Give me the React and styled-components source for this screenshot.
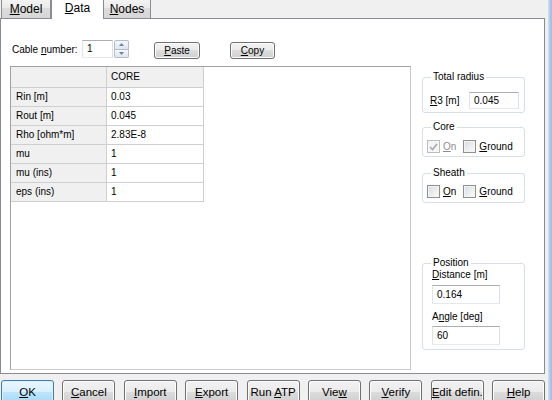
import React from "react";
import styled, { createGlobalStyle } from "styled-components";

const GlobalStyle = createGlobalStyle`
  html, body { margin: 0; padding: 0; background: #f0f0f0; }
  body {
    font-family: "Liberation Sans", Arial, sans-serif;
    font-size: 10px;
    color: #000;
  }
`;

const Window = styled.div`
  width: 552px;
  height: 400px;
  display: flex;
  overflow: hidden;
  background: #f0f0f0;
`;

const Main = styled.div`
  width: 548px;
  display: flex;
  flex-direction: column;
`;

const Frame = styled.div`
  width: 4px;
  background: linear-gradient(to right, #d3e2f1, #a9c6e4 60%, #9fbfe0);
`;

const TabStrip = styled.div`
  height: 18px;
  display: flex;
  align-items: flex-end;
  padding-left: 1px;
  position: relative;
  z-index: 1;
`;

const Tab = styled.div`
  box-sizing: border-box;
  width: ${(p) => p.$w}px;
  height: ${(p) => (p.$active ? 21 : 20)}px;
  margin-bottom: ${(p) => (p.$active ? -1 : 0)}px;
  border: 1px solid #898c95;
  border-bottom: none;
  border-left-width: ${(p) => (p.$first ? 1 : p.$active ? 1 : 0)}px;
  background: ${(p) =>
    p.$active ? "#fff" : "linear-gradient(#f4f4f4, #e9e9e9 50%, #dcdcdc 50%, #d6d6d6)"};
  font-size: 12px;
  display: flex;
  align-items: flex-end;
  justify-content: center;
  padding-bottom: ${(p) => (p.$active ? 5 : 3)}px;
  line-height: 12px;
`;

const Panel = styled.div`
  height: 356px;
  box-sizing: border-box;
  margin-right: 3px;
  background: #fff;
  border: 1px solid #898c95;
  padding: 21px 0 0 9px;
  display: flex;
  flex-direction: column;
  gap: 8px;
`;

const TopRow = styled.div`
  height: 18px;
  display: flex;
  align-items: flex-start;
  padding-left: 2px;
`;

const Label = styled.span`
  line-height: 12px;
  color: ${(p) => (p.$disabled ? "#8d8d8d" : "#000")};
  white-space: nowrap;
`;

const CableLabel = styled(Label)`
  margin-top: 4px;
  width: 70px;
`;

const U = styled.span`
  text-decoration: underline;
  text-underline-offset: 1px;
`;

const Input = styled.div`
  box-sizing: border-box;
  width: ${(p) => p.$w}px;
  height: ${(p) => p.$h}px;
  border: 1px solid #e3e9ef;
  border-top-color: #abadb3;
  border-left-color: #e2e3ea;
  border-right-color: #dbdfe6;
  background: #fff;
  padding-left: 4px;
  display: flex;
  align-items: center;
  line-height: 12px;
`;

const Spin = styled.div`
  width: 15px;
  height: 18px;
  margin-left: 1px;
  display: flex;
  flex-direction: column;
`;

const SpinHalf = styled.div`
  flex: 1;
  box-sizing: border-box;
  border: 1px solid #b4bcc8;
  border-top-width: ${(p) => (p.$down ? 0 : 1)}px;
  border-radius: ${(p) => (p.$down ? "0 0 2px 2px" : "2px 2px 0 0")};
  background: linear-gradient(#f6f8fb, #dfe5ee);
  display: flex;
  align-items: center;
  justify-content: center;
`;

const Button = styled.div`
  box-sizing: border-box;
  width: ${(p) => p.$w}px;
  height: ${(p) => p.$h}px;
  margin-left: ${(p) => p.$ml || 0}px;
  margin-top: ${(p) => p.$mt || 0}px;
  flex-shrink: 0;
  border: 1px solid ${(p) => (p.$default ? "#3c7fb1" : "#707070")};
  border-radius: 3px;
  background: ${(p) =>
    p.$default
      ? "linear-gradient(#eaf6fd, #d9f0fc 50%, #bee6fd 50%, #a7d9f5)"
      : "linear-gradient(#f2f2f2, #ebebeb 50%, #dddddd 50%, #cfcfcf)"};
  box-shadow: inset 0 0 0 1px ${(p) => (p.$default ? "#dff0fb" : "#fcfcfc")};
  display: flex;
  align-items: center;
  justify-content: center;
  font-size: ${(p) => p.$fs || 10}px;
  line-height: 12px;
  white-space: nowrap;
`;

const Body = styled.div`
  display: flex;
  align-items: flex-start;
  gap: 11px;
`;

const GridBox = styled.div`
  box-sizing: border-box;
  width: 401px;
  height: 304px;
  border: 1px solid #a0a0a0;
  border-right-color: #c8c8c8;
  border-bottom-color: #c8c8c8;
  background: #fff;
`;

const Table = styled.div`
  display: grid;
  grid-template-columns: 96px 97px;
  grid-template-rows: 21px;
  grid-auto-rows: 19px;
`;

const Cell = styled.div`
  box-sizing: border-box;
  border-right: 1px solid #cfcfcf;
  border-bottom: 1px solid #cfcfcf;
  background: ${(p) => (p.$fixed ? "#f0f0f0" : "#fff")};
  padding-left: ${(p) => (p.$head ? 5 : 4)}px;
  display: flex;
  align-items: center;
  line-height: 12px;
  white-space: nowrap;
`;

const Side = styled.div`
  width: 103px;
  display: flex;
  flex-direction: column;
`;

const Group = styled.div`
  position: relative;
  box-sizing: border-box;
  height: ${(p) => p.$h}px;
  margin-top: ${(p) => p.$mt}px;
  padding: ${(p) => p.$pad};
  border: 1px solid #d5dfe5;
  border-radius: 3px;
`;

const Caption = styled.span`
  position: absolute;
  top: -7px;
  left: 8px;
  padding: 0 2px;
  background: #fff;
  line-height: 12px;
`;

const FieldRow = styled.div`
  display: flex;
  align-items: center;
  justify-content: space-between;
`;

const CheckRow = styled.div`
  display: flex;
  align-items: center;
  gap: 7px;
`;

const CheckItem = styled.div`
  display: flex;
  align-items: center;
  gap: 3px;
`;

const Box = styled.span`
  box-sizing: border-box;
  width: 13px;
  height: 13px;
  border: 1px solid ${(p) => (p.$disabled ? "#bcbcbc" : "#8e8f8f")};
  background: ${(p) =>
    p.$disabled ? "#f4f4f4" : "linear-gradient(135deg, #d6d9dd, #f3f3f3 70%, #fafafa)"};
  box-shadow: inset 0 0 0 1px ${(p) => (p.$disabled ? "#f7f7f7" : "#f4f4f4")};
  display: flex;
  align-items: center;
  justify-content: center;
`;

const Stack = styled.div`
  display: flex;
  flex-direction: column;
`;

const StackLabel = styled(Label)`
  margin-top: ${(p) => p.$mt}px;
  margin-bottom: ${(p) => p.$mb}px;
`;

const ButtonBar = styled.div`
  height: 26px;
  display: flex;
  padding: 6px 0 0 1px;
  box-sizing: border-box;
  gap: 8.4px;
`;

function Check({ checked, disabled, children }) {
  return (
    <CheckItem>
      <Box $disabled={disabled}>
        {checked && (
          <svg width="9" height="8" viewBox="0 0 9 8">
            <path d="M1 4 L3.5 6.5 L8 1" fill="none" stroke={disabled ? "#a8a8a8" : "#333"} strokeWidth="1.6" />
          </svg>
        )}
      </Box>
      <Label $disabled={disabled}>{children}</Label>
    </CheckItem>
  );
}

function Arrow({ down }) {
  return (
    <svg width="5" height="3" viewBox="0 0 5 3">
      <path d={down ? "M0 0 H5 L2.5 3 Z" : "M0 3 H5 L2.5 0 Z"} fill="#6a84a8" />
    </svg>
  );
}

const rows = [
  ["Rin [m]", "0.03"],
  ["Rout [m]", "0.045"],
  ["Rho [ohm*m]", "2.83E-8"],
  ["mu", "1"],
  ["mu (ins)", "1"],
  ["eps (ins)", "1"],
];

const buttons = [
  [<><U>O</U>K</>, true],
  [<><U>C</U>ancel</>],
  [<><U>I</U>mport</>],
  [<><U>E</U>xport</>],
  [<>Run <U>A</U>TP</>],
  [<>Vie<U>w</U></>],
  [<><U>V</U>erify</>],
  [<><U>E</U>dit defin.</>],
  [<><U>H</U>elp</>],
];

export default function App() {
  return (
    <Window>
      <GlobalStyle />
      <Main>
        <TabStrip>
          <Tab $w={50} $first>
            <span><U>M</U>odel</span>
          </Tab>
          <Tab $w={53} $active>
            <span><U>D</U>ata</span>
          </Tab>
          <Tab $w={47}>
            <span><U>N</U>odes</span>
          </Tab>
        </TabStrip>
        <Panel>
          <TopRow>
            <CableLabel>
              Cable <U>n</U>umber:
            </CableLabel>
            <Input $w={31} $h={18}>1</Input>
            <Spin>
              <SpinHalf>
                <Arrow />
              </SpinHalf>
              <SpinHalf $down>
                <Arrow down />
              </SpinHalf>
            </Spin>
            <Button $w={46} $h={17} $ml={25} $mt={2}>
              <span><U>P</U>aste</span>
            </Button>
            <Button $w={45} $h={17} $ml={30} $mt={2}>
              <span><U>C</U>opy</span>
            </Button>
          </TopRow>
          <Body>
            <GridBox>
              <Table>
                <Cell $fixed />
                <Cell $fixed>CORE</Cell>
                {rows.map(([name, value]) => (
                  <React.Fragment key={name}>
                    <Cell $fixed $head>{name}</Cell>
                    <Cell>{value}</Cell>
                  </React.Fragment>
                ))}
              </Table>
            </GridBox>
            <Side>
              <Group $h={36} $mt={11} $pad="14px 5px 2px 7px">
                <Caption>Total radius</Caption>
                <FieldRow>
                  <Label>
                    <U>R</U>3 [m]
                  </Label>
                  <Input $w={50} $h={17}>0.045</Input>
                </FieldRow>
              </Group>
              <Group $h={30} $mt={14} $pad="12px 4px 3px 4px">
                <Caption>Core</Caption>
                <CheckRow>
                  <Check checked disabled>
                    <U>O</U>n
                  </Check>
                  <Check>
                    <U>G</U>round
                  </Check>
                </CheckRow>
              </Group>
              <Group $h={30} $mt={16} $pad="11px 4px 3px 4px">
                <Caption>Sheath</Caption>
                <CheckRow>
                  <Check>
                    <U>O</U>n
                  </Check>
                  <Check>
                    <U>G</U>round
                  </Check>
                </CheckRow>
              </Group>
              <Group $h={87} $mt={60} $pad="5px 4px 3px 9px">
                <Caption>Position</Caption>
                <Stack>
                  <StackLabel $mt={0} $mb={4}>
                    <U>D</U>istance [m]
                  </StackLabel>
                  <Input $w={68} $h={19}>0.164</Input>
                  <StackLabel $mt={7} $mb={3}>
                    A<U>n</U>gle [deg]
                  </StackLabel>
                  <Input $w={68} $h={19}>60</Input>
                </Stack>
              </Group>
            </Side>
          </Body>
        </Panel>
        <ButtonBar>
          {buttons.map(([label, def], i) => (
            <Button key={i} $w={53} $h={23} $fs={11.5} $default={def}>
              <span>{label}</span>
            </Button>
          ))}
        </ButtonBar>
      </Main>
      <Frame />
    </Window>
  );
}
